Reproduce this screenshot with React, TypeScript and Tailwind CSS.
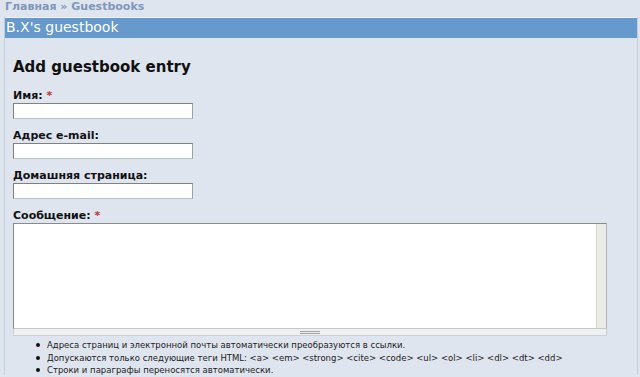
export default function App() {
  const tips = [
    "Адреса страниц и электронной почты автоматически преобразуются в ссылки.",
    "Допускаются только следующие теги HTML: <a> <em> <strong> <cite> <code> <ul> <ol> <li> <dl> <dt> <dd>",
    "Строки и параграфы переносятся автоматически.",
  ];

  const inputCls =
    "mt-[1px] h-[16px] w-[180px] border border-t-[#808080] border-l-[#808080] border-r-[#a0a0a0] border-b-[#c0c0c0] bg-white p-0";

  return (
    <div className="w-[640px] h-[377px] overflow-hidden bg-[#dfe5ef] font-['DejaVu_Sans',sans-serif] text-[#111]">
      {/* breadcrumb */}
      <div className="h-[17px] pl-[5px] pt-[1px] text-[11px] font-bold leading-[12px] text-[#7f97bb]">
        Главная » Guestbooks
      </div>

      <div className="ml-[4px] mr-[2px] border-l border-r border-[#c3cedd]">
        {/* title bar */}
        <div className="h-[21px] border-t border-[#f0f4fa] bg-[#6699cc] pl-[1px] text-[14px] leading-[19px] text-white">
          B.X's guestbook
        </div>

        <div className="pl-[8px] pt-[20px]">
          <h2 className="text-[15px] font-bold leading-[18px] text-[#111]">Add guestbook entry</h2>

          <div className="mt-[13px] flex flex-col">
            <label className="text-[11px] font-bold leading-[13px]">
              Имя: <span className="text-[#c03030]">*</span>
            </label>
            <input className={inputCls} />

            <label className="mt-[10px] text-[11px] font-bold leading-[13px]">Адрес e-mail:</label>
            <input className={inputCls} />

            <label className="mt-[10px] text-[11px] font-bold leading-[13px]">Домашняя страница:</label>
            <input className={inputCls} />

            <label className="mt-[10px] text-[11px] font-bold leading-[13px]">
              Сообщение: <span className="text-[#c03030]">*</span>
            </label>
            <div className="mt-[1px] flex w-[594px] h-[106px] border border-t-[#8a8a8a] border-l-[#8a8a8a] border-r-[#b0b0b0] border-b-[#c8c8c8] bg-white">
              <div className="flex-1" />
              <div className="w-[10px] border-l border-[#d8d8d0] bg-[#ecece6]" />
            </div>
            <div className="flex h-[7px] w-[594px] items-center justify-center border-x border-b border-[#d0d0d0] bg-[#eef0f4]">
              <div className="h-[3px] w-[20px] border-y border-[#a0a0a0]" />
            </div>
          </div>

          <ul className="mt-[4px] flex flex-col gap-[2.5px] pl-[23px] text-[8.5px] leading-[10px] text-[#222]">
            {tips.map((t) => (
              <li key={t} className="flex items-center gap-[7px]">
                <span className="h-[4px] w-[4px] rounded-full bg-[#111]" />
                <span>{t}</span>
              </li>
            ))}
          </ul>
        </div>
      </div>
    </div>
  );
}
